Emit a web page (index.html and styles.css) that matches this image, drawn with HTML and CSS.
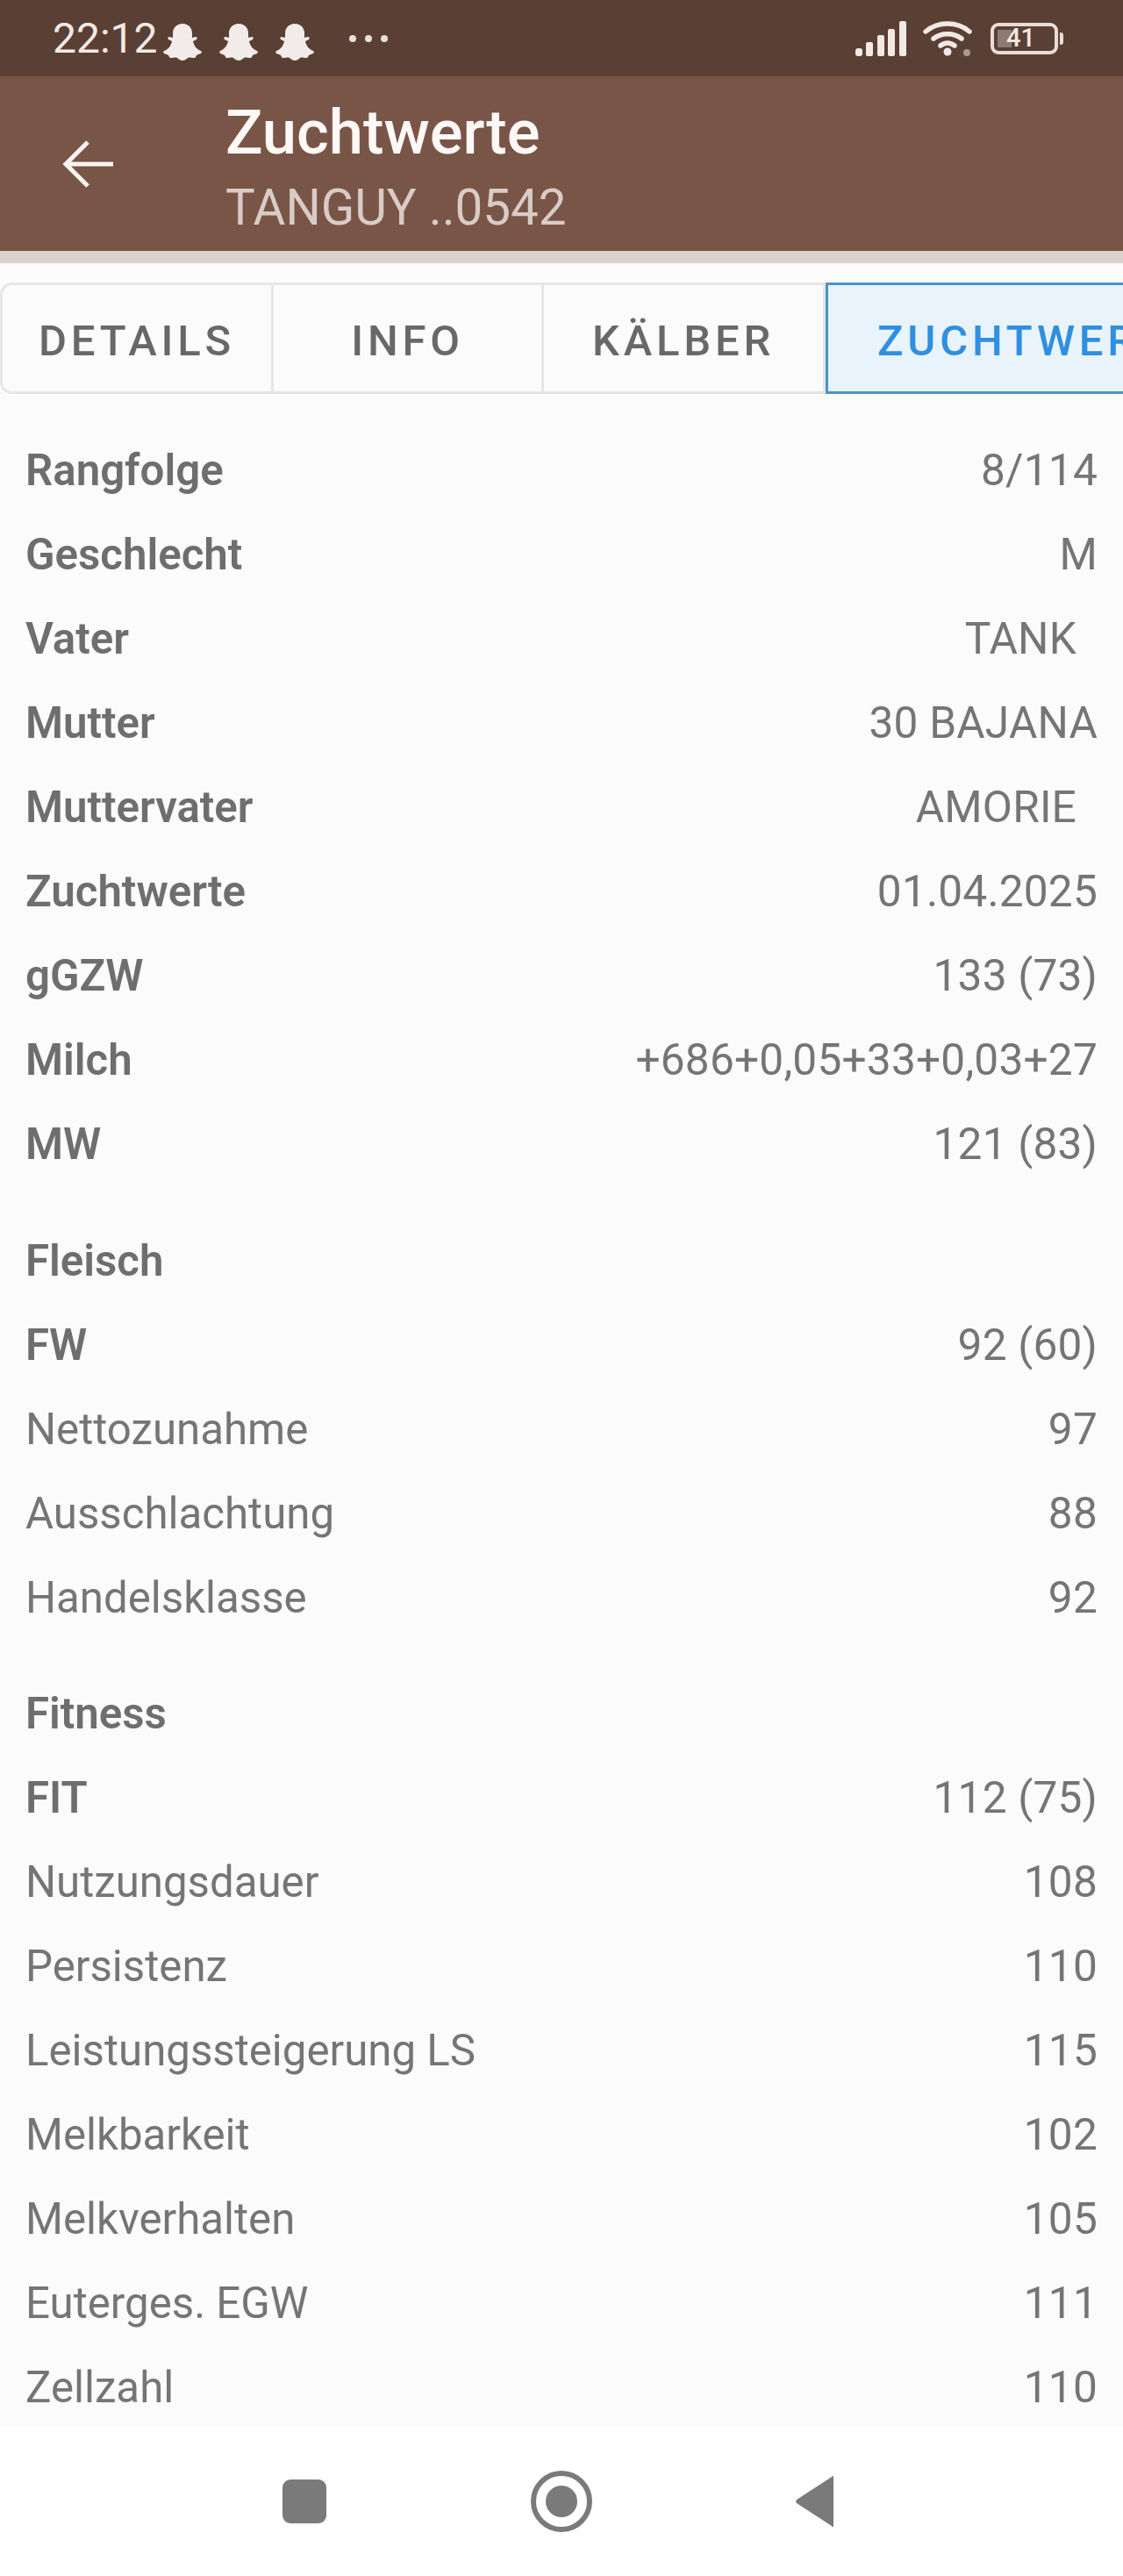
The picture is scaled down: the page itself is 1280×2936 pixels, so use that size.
FILE: index.html
```html
<!DOCTYPE html>
<html lang="de">
<head>
    <meta charset="UTF-8">
    <title>Zuchtwerte</title>
    <link rel="stylesheet" href="styles.css">
</head>
<body>
<svg class="defs" width="0" height="0">
    <symbol id="ghost" viewBox="0 0 44 42">
        <path d="M22 0c7 0 11 5 11 11v5l4-1c2 0 2 2 1 3l-4 2c1 5 4 9 9 11 1 1 1 2 0 3-2 1-4 1-5 2-1 2-1 3-3 3-3 0-5-1-7 0-2 2-4 3-6 3s-4-1-6-3c-2-1-4 0-7 0-2 0-2-1-3-3-1-1-3-1-5-2-1-1-1-2 0-3 5-2 8-6 9-11l-4-2c-1-1-1-3 1-3l4 1v-5C11 5 15 0 22 0z"/>
    </symbol>
</svg>

<div class="statusbar">
    <span class="time">22:12</span>
    <svg class="ghost"><use href="#ghost"/></svg>
    <svg class="ghost"><use href="#ghost"/></svg>
    <svg class="ghost"><use href="#ghost"/></svg>
    <span class="dots"><i></i><i></i><i></i></span>
    <div class="status-right">
        <svg class="signal" width="58" height="40" viewBox="0 0 58 40">
            <rect x="0" y="31" width="8" height="9" rx="3"/>
            <rect x="12" y="24" width="8" height="16" rx="2"/>
            <rect x="25" y="16" width="8" height="24" rx="2"/>
            <rect x="37" y="9" width="8" height="31" rx="2"/>
            <rect x="50" y="0" width="8" height="40" rx="2"/>
        </svg>
        <svg class="wifi" width="58" height="40" viewBox="0 0 58 40">
            <path d="M3 12C17 0 39 0 53 12M12 20c9-7 23-7 32 0M20 28c5-4 11-4 16 0" fill="none" stroke="#f3e9e4" stroke-width="5.5" stroke-linecap="round"/>
            <circle cx="28" cy="35" r="4.5" fill="#f3e9e4"/>
            <circle cx="50" cy="36" r="4" fill="#a89a93"/>
        </svg>
        <div class="battery">
            <span class="battery-level"></span>
            <span class="battery-text">41</span>
        </div>
        <span class="battery-tip"></span>
    </div>
</div>

<div class="appbar">
    <svg class="back" width="60" height="60" viewBox="0 0 60 60">
        <path d="M59 30H5M30 5L5 30l25 25" fill="none" stroke="#fbf5f1" stroke-width="5"/>
    </svg>
    <div class="titles">
        <div class="title">Zuchtwerte</div>
        <div class="subtitle">TANGUY ..0542</div>
    </div>
</div>
<div class="shade"></div>

<div class="tabs">
    <div class="tab tab-details">DETAILS</div>
    <div class="tab tab-info">INFO</div>
    <div class="tab tab-kaelber">KÄLBER</div>
    <div class="tab tab-active">ZUCHTWERTE</div>
</div>

<div class="content">
    <div class="group">
        <div class="row strong"><span>Rangfolge</span><span class="val">8/114</span></div>
        <div class="row strong"><span>Geschlecht</span><span class="val">M</span></div>
        <div class="row strong"><span>Vater</span><span class="val link">TANK</span></div>
        <div class="row strong"><span>Mutter</span><span class="val">30 BAJANA</span></div>
        <div class="row strong"><span>Muttervater</span><span class="val link">AMORIE</span></div>
        <div class="row strong"><span>Zuchtwerte</span><span class="val">01.04.2025</span></div>
        <div class="row strong"><span>gGZW</span><span class="val">133 (73)</span></div>
        <div class="row strong"><span>Milch</span><span class="val">+686+0,05+33+0,03+27</span></div>
        <div class="row strong"><span>MW</span><span class="val">121 (83)</span></div>
    </div>
    <div class="group">
        <div class="row strong"><span>Fleisch</span></div>
        <div class="row strong"><span>FW</span><span class="val">92 (60)</span></div>
        <div class="row"><span>Nettozunahme</span><span class="val">97</span></div>
        <div class="row"><span>Ausschlachtung</span><span class="val">88</span></div>
        <div class="row"><span>Handelsklasse</span><span class="val">92</span></div>
    </div>
    <div class="group">
        <div class="row strong"><span>Fitness</span></div>
        <div class="row strong"><span>FIT</span><span class="val">112 (75)</span></div>
        <div class="row"><span>Nutzungsdauer</span><span class="val">108</span></div>
        <div class="row"><span>Persistenz</span><span class="val">110</span></div>
        <div class="row"><span>Leistungssteigerung LS</span><span class="val">115</span></div>
        <div class="row"><span>Melkbarkeit</span><span class="val">102</span></div>
        <div class="row"><span>Melkverhalten</span><span class="val">105</span></div>
        <div class="row"><span>Euterges. EGW</span><span class="val">111</span></div>
        <div class="row"><span>Zellzahl</span><span class="val">110</span></div>
    </div>
</div>

<div class="navbar">
    <span class="nav-square"></span>
    <span class="nav-home"><i></i></span>
    <svg class="nav-back" width="46" height="58" viewBox="0 0 46 58">
        <path d="M44 1v56a1 1 0 0 1-2 0L2 31a3 3 0 0 1 0-4L42 1a1 1 0 0 1 2 0z"/>
    </svg>
</div>
</body>
</html>
```

FILE: styles.css
```css
* {
    box-sizing: border-box;
}

body {
    margin: 0;
    width: 1280px;
    height: 2936px;
    overflow: hidden;
    display: flex;
    flex-direction: column;
    background: #fbfbfb;
    font-family: Roboto, "Liberation Sans", sans-serif;
}

.defs {
    position: absolute;
}

/* status bar */
.statusbar {
    height: 87px;
    flex: none;
    display: flex;
    align-items: center;
    padding: 0 68px 0 60px;
    background: #5a3f35;
    color: #f3e9e4;
}

.time {
    font-size: 48px;
    margin-right: 6px;
}

.ghost {
    width: 44px;
    height: 42px;
    margin-right: 20px;
    margin-top: 8px;
    fill: #f1ece9;
}

.dots {
    display: flex;
    gap: 10px;
    margin-left: 20px;
}

.dots i {
    width: 8px;
    height: 8px;
    border-radius: 50%;
    background: #e9dfda;
}

.status-right {
    margin-left: auto;
    display: flex;
    align-items: center;
}

.signal {
    fill: #f3e9e4;
    margin-right: 19px;
}

.wifi {
    margin-right: 19px;
}

.battery {
    width: 77px;
    height: 36px;
    border: 4px solid #e9dcd6;
    border-radius: 9px;
    position: relative;
    display: flex;
    align-items: center;
    justify-content: center;
}

.battery-level {
    position: absolute;
    left: 4px;
    top: 4px;
    bottom: 4px;
    width: 16px;
    background: #8d7a72;
}

.battery-text {
    position: relative;
    font-size: 29px;
    font-weight: 500;
    line-height: 1;
    margin-left: -8px;
}

.battery-tip {
    width: 4px;
    height: 14px;
    margin-left: 2px;
    border-radius: 0 3px 3px 0;
    background: #e9dcd6;
}

/* app bar */
.appbar {
    height: 199px;
    flex: none;
    display: flex;
    align-items: center;
    background: #795548;
}

.back {
    margin-left: 70px;
    margin-right: 127px;
}

.titles {
    padding-top: 5px;
}

.title {
    font-size: 70.5px;
    font-weight: 500;
    color: #fdf8f5;
    line-height: 82px;
}

.subtitle {
    font-size: 56.5px;
    color: #d9cbc5;
    line-height: 64px;
    margin-top: 13px;
}

.shade {
    height: 14px;
    flex: none;
    background: #dcd0cb;
}

/* tabs */
.tabs {
    flex: none;
    display: flex;
    height: 127px;
    margin-top: 22px;
    overflow: hidden;
}

.tab {
    flex: none;
    display: flex;
    align-items: center;
    height: 127px;
    padding-top: 5px;
    font-size: 49px;
    font-weight: 500;
    letter-spacing: 4.8px;
    color: #686868;
    border: 3px solid #e6e6e6;
    border-left: 0;
    justify-content: center;
}

.tab-details {
    width: 312px;
    border-left: 3px solid #e6e6e6;
    border-radius: 14px 0 0 14px;
}

.tab-info {
    width: 308px;
}

.tab-kaelber {
    width: 321px;
}

.tab-active {
    width: 420px;
    padding-left: 56px;
    justify-content: flex-start;
    white-space: nowrap;
    color: #2f8fe0;
    background: #e9f3fb;
    border: 3px solid #4a94c8;
}

/* list */
.content {
    flex: 1;
    overflow: hidden;
    padding-top: 39px;
}

.group {
    margin-bottom: 36.6px;
}

.row {
    height: 96px;
    display: flex;
    justify-content: space-between;
    align-items: center;
    padding: 0 29px 0 29px;
    font-size: 49.2px;
    color: #757575;
}

.strong {
    font-weight: 600;
    color: #6e6e6e;
}

.val {
    font-size: 49.6px;
    letter-spacing: 0.2px;
    font-weight: 400;
    color: #757575;
}

.link {
    margin-right: 24px;
}

/* bottom nav */
.navbar {
    height: 170px;
    flex: none;
    position: relative;
    background: #fff;
    display: flex;
    align-items: center;
    padding: 0 0 0 322px;
}

.nav-square {
    width: 50px;
    height: 50px;
    border-radius: 9px;
    background: #7a7a7a;
}

.nav-home {
    width: 70px;
    height: 70px;
    margin-left: 233px;
    border: 6px solid #7a7a7a;
    border-radius: 50%;
    display: flex;
    align-items: center;
    justify-content: center;
}

.nav-home i {
    width: 36px;
    height: 36px;
    border-radius: 50%;
    background: #7a7a7a;
}

.nav-back {
    margin-left: 231px;
    fill: #7a7a7a;
}
```
